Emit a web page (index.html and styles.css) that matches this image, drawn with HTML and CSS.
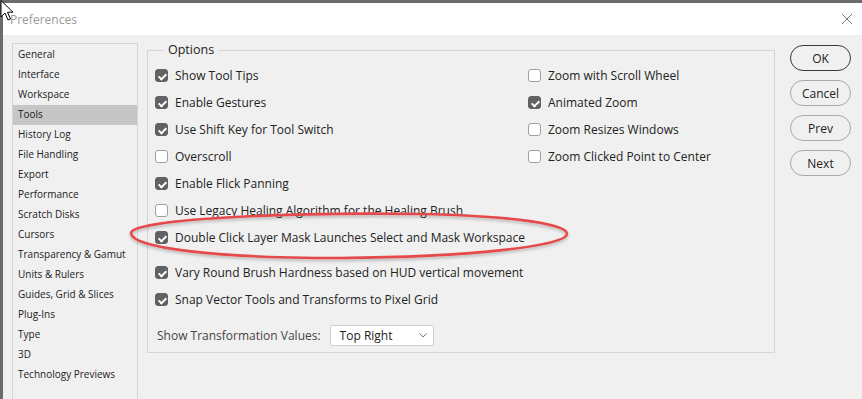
FILE: index.html
```html
<!DOCTYPE html>
<html>
<head>
<meta charset="utf-8">
<link rel="stylesheet" href="styles.css">
</head>
<body>
<div class="window">
  <div class="titlebar">
    <span class="title">Preferences</span>
    <svg class="close" width="12" height="12" viewBox="0 0 12 12"><path d="M1 1L11 11M11 1L1 11" stroke="#777" stroke-width="1" fill="none"/></svg>
  </div>
  <div class="content">
    <ul class="sidebar">
      <li>General</li>
      <li>Interface</li>
      <li>Workspace</li>
      <li class="sel">Tools</li>
      <li>History Log</li>
      <li>File Handling</li>
      <li>Export</li>
      <li>Performance</li>
      <li>Scratch Disks</li>
      <li>Cursors</li>
      <li>Transparency &amp; Gamut</li>
      <li>Units &amp; Rulers</li>
      <li>Guides, Grid &amp; Slices</li>
      <li>Plug-Ins</li>
      <li>Type</li>
      <li>3D</li>
      <li>Technology Previews</li>
    </ul>
    <fieldset class="options">
      <legend>Options</legend>
      <div class="cols">
        <div class="col">
          <div class="row"><span class="cb on"></span>Show Tool Tips</div>
          <div class="row"><span class="cb on"></span>Enable Gestures</div>
          <div class="row"><span class="cb on"></span>Use Shift Key for Tool Switch</div>
          <div class="row"><span class="cb"></span>Overscroll</div>
          <div class="row"><span class="cb on"></span>Enable Flick Panning</div>
        </div>
        <div class="col right">
          <div class="row"><span class="cb"></span>Zoom with Scroll Wheel</div>
          <div class="row"><span class="cb on"></span>Animated Zoom</div>
          <div class="row"><span class="cb"></span>Zoom Resizes Windows</div>
          <div class="row"><span class="cb"></span>Zoom Clicked Point to Center</div>
        </div>
      </div>
      <div class="row"><span class="cb"></span>Use Legacy Healing Algorithm for the Healing Brush</div>
      <div class="row"><span class="cb on"></span>Double Click Layer Mask Launches Select and Mask Workspace</div>
      <div class="row gap"><span class="cb on"></span>Vary Round Brush Hardness based on HUD vertical movement</div>
      <div class="row"><span class="cb on"></span>Snap Vector Tools and Transforms to Pixel Grid</div>
      <div class="selectrow">
        <span class="sl-label">Show Transformation Values:</span>
        <span class="select">Top Right<svg width="8" height="5" viewBox="0 0 8 5"><path d="M0.5 0.5L4 4L7.5 0.5" stroke="#777" fill="none"/></svg></span>
      </div>
    </fieldset>
    <div class="buttons">
      <button class="btn default">OK</button>
      <button class="btn">Cancel</button>
      <button class="btn">Prev</button>
      <button class="btn">Next</button>
    </div>
  </div>
</div>
<svg class="ellipse" width="862" height="399" viewBox="0 0 862 399">
  <defs>
    <filter id="sh" x="-10%" y="-50%" width="120%" height="200%">
      <feDropShadow dx="0" dy="2" stdDeviation="1.5" flood-color="#000" flood-opacity="0.25"/>
    </filter>
  </defs>
  <path d="M131 233 C131 219 290 212 420 214 C520 216 568 225 567 234 C566 246 470 257 340 258 C215 258 131 248 131 233 Z" fill="none" stroke="#e5484a" stroke-width="2.6" filter="url(#sh)"/>
</svg>
<svg class="cursor" width="16" height="22" viewBox="0 0 16 22">
  <path d="M1 0.5 L1 17 L5 13 L8 20 L10.5 19 L7.5 12.2 L13 12.2 Z" fill="#fff" stroke="#000" stroke-width="1"/>
</svg>
</body>
</html>
```
FILE: styles.css
```css
* { box-sizing: border-box; }
html, body { margin: 0; padding: 0; }
body {
  width: 862px;
  height: 399px;
  overflow: hidden;
  background: #6b6b6b;
  font-family: "Open Sans", "DejaVu Sans", sans-serif;
  position: relative;
}
.window {
  margin: 3px 0 0 3px;
  height: 396px;
  background: #f0f0f0;
}
.titlebar {
  height: 32px;
  background: #fff;
  display: flex;
  align-items: center;
  justify-content: space-between;
  padding: 0 9px 0 7px;
}
.title {
  font-size: 12px;
  color: #9a9a9a;
}
.close { display: block; }
.content {
  display: flex;
  align-items: flex-start;
  padding: 8px 0 0 9px;
}
.sidebar {
  list-style: none;
  margin: 0;
  padding: 1px 0 40px 0;
  width: 126px;
  height: 370px;
  border: 1px solid #d5d5d5;
  border-bottom: none;
  font-size: 10px;
  color: #222;
}
.sidebar li {
  height: 20px;
  line-height: 19px;
  padding-left: 5px;
}
.sidebar li.sel { background: #c6c6c6; }
.options {
  margin: 0 0 0 9px;
  width: 628px;
  height: 310px;
  border: 1px solid #d5d5d5;
  padding: 5px 0 0 7px;
  min-width: 0;
}
.options legend {
  font-size: 12.5px;
  color: #222;
  padding: 0 4px;
  margin-left: 9px;
  line-height: 14px;
}
.cols { display: flex; }
.col { width: 373px; flex: none; }
.col.right { flex: 1 1 auto; width: auto; }
.row {
  height: 27px;
  display: flex;
  align-items: center;
  font-size: 12px;
  color: #222;
  white-space: nowrap;
}
.row.gap { margin-top: 8px; }
.cb {
  width: 13px;
  height: 13px;
  border-radius: 3px;
  border: 1px solid #a0a0a0;
  background: #fff;
  margin-right: 7px;
  position: relative;
  flex: none;
}
.cb.on {
  background: #616161;
  border-color: #616161;
}
.cb.on::after {
  content: "";
  position: absolute;
  left: 3.5px;
  top: 1.5px;
  width: 3px;
  height: 6px;
  border: solid #fff;
  border-width: 0 2px 2px 0;
  transform: rotate(45deg);
}
.selectrow {
  display: flex;
  align-items: center;
  margin-top: 12px;
  padding-left: 2px;
  font-size: 12px;
  color: #444;
}
.sl-label { margin-right: 9px; }
.select {
  width: 104px;
  height: 21px;
  background: #fff;
  border: 1px solid #cfcfcf;
  border-radius: 2px;
  display: flex;
  align-items: center;
  justify-content: space-between;
  padding: 0 6px 0 9px;
  color: #222;
}
.buttons {
  display: flex;
  flex-direction: column;
  gap: 9px;
  margin: 2px 0 0 15px;
}
.btn {
  width: 61px;
  height: 26px;
  border-radius: 13px;
  border: 1px solid #a9a9a9;
  background: #f0f0f0;
  font-family: "Open Sans", "DejaVu Sans", sans-serif;
  font-size: 12px;
  color: #222;
  padding: 0;
}
.btn.default { border-color: #3a3a3a; }
.ellipse {
  position: absolute;
  left: 0;
  top: 0;
  pointer-events: none;
}
.cursor {
  position: absolute;
  left: 0;
  top: 0;
}
```
